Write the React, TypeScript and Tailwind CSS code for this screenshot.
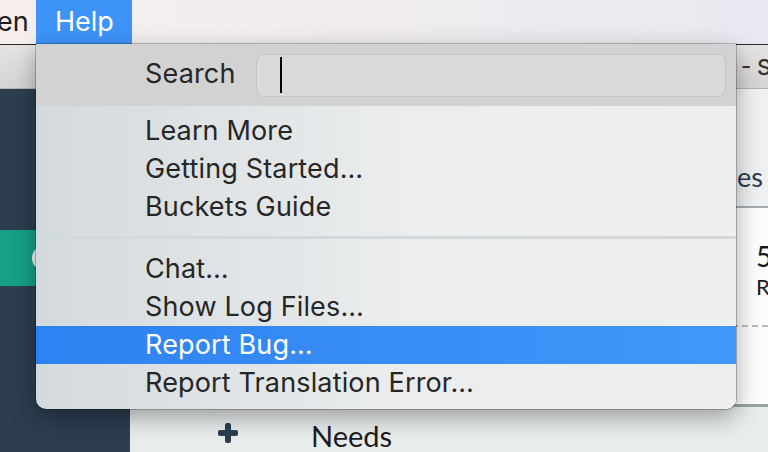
import React from "react";

const menuFont = "font-['Inter','Liberation_Sans',sans-serif]";

function PlusIcon() {
  return (
    <svg width="20" height="20" viewBox="0 0 20 20">
      <rect x="7" y="0" width="6" height="20" rx="2" fill="#2c3e50" />
      <rect x="0" y="7" width="20" height="6" rx="2" fill="#2c3e50" />
    </svg>
  );
}

function MenuBar() {
  return (
    <div className={`h-[44px] shrink-0 flex bg-linear-to-r from-[#f7efed] to-[#e8e9f0] text-[27px] ${menuFont}`}>
      <div className="w-[36px] shrink-0 flex items-center overflow-hidden">
        <span className="ml-[-3px] mt-[-2px] text-[#1d1d1d] leading-none">en</span>
      </div>
      <div className="w-[96px] shrink-0 bg-[#3d93f8] flex items-center pl-[19px] text-white leading-none">
        <span className="mt-[-2px]">Help</span>
      </div>
    </div>
  );
}

function TitleBar() {
  return (
    <div className="h-[44px] shrink-0 border-b border-[#b4b2b2] bg-linear-to-b from-[#e6e3e3] to-[#d5d3d3] flex items-center pl-[741px] overflow-hidden">
      <span className={`text-[22px] font-medium text-[#333] whitespace-nowrap leading-none ${menuFont}`}>- S</span>
    </div>
  );
}

function Sidebar() {
  return (
    <div className="w-[130px] shrink-0 bg-[#2c3e50] pt-[141px]">
      <div className="h-[56px] bg-[#17a085] flex items-center pl-[32px]">
        <div className="w-[26px] h-[26px] rounded-full bg-[#f4f4f4]" />
      </div>
    </div>
  );
}

function Main() {
  return (
    <div className="flex-1 min-w-0 flex flex-col font-['Lato',sans-serif] overflow-hidden">
      <div className="h-[119px] shrink-0 bg-[#eef0f2] border-b-2 border-[#a7adb1] flex items-end pb-[16px] pl-[607px]">
        <span className="text-[27px] text-[#2c3e50] leading-none">es</span>
      </div>
      <div className="h-[196px] shrink-0 bg-[#fdfdfd] flex flex-col pl-[626px] pt-[34px]">
        <span className="text-[28px] leading-none text-[#1a1a1a] h-[34px]">5</span>
        <span className="text-[22px] leading-none text-[#1a1a1a]">R</span>
        <div className="mt-[27px] ml-[-626px] border-t-2 border-dashed border-[#bdbdbd]" />
      </div>
      <div className="flex-1 bg-[#e9eced] border-t-[3px] border-[#95a5a6] flex items-start pl-[88px] pt-[16px]">
        <PlusIcon />
        <span className="ml-[73px] mt-[-2px] text-[29px] leading-none text-[#1c1c1c]">Needs</span>
      </div>
    </div>
  );
}

function Item({ label, active }: { label: string; active?: boolean }) {
  return (
    <div
      className={`h-[38px] flex items-center pl-[109px] pb-[2px] whitespace-nowrap ${
        active ? "bg-linear-to-r from-[#2d82f1] to-[#4297fa] text-white" : "text-[#262626]"
      }`}
    >
      {label}
    </div>
  );
}

function HelpMenu() {
  return (
    <div
      className={`absolute left-[36px] top-[44px] w-[700px] h-[365px] rounded-b-[10px] overflow-hidden bg-linear-to-r from-[#d3dadd] via-[#eaeced] to-[#f0efef] shadow-[0_8px_24px_rgba(0,0,0,0.35),0_0_0_1px_rgba(0,0,0,0.22)] text-[27px] tracking-[0.15px] leading-none ${menuFont}`}
    >
      <div className="h-[62px] bg-[#d2d2d2] flex items-center">
        <div className="w-[220px] pl-[109px] pb-[3px] text-[#262626]">Search</div>
        <div className="flex-1 mr-[10px] h-[43px] rounded-[8px] border border-[#c4c4c4] bg-[#d9d9d9] flex items-center pl-[23px]">
          <div className="w-[2px] h-[36px] bg-black" />
        </div>
      </div>
      <div className="pt-[6px]">
        <Item label="Learn More" />
        <Item label="Getting Started…" />
        <Item label="Buckets Guide" />
        <div className="h-[24px] pt-[10px]">
          <div className="h-[3px] bg-[#d4d8da]" />
        </div>
        <Item label="Chat…" />
        <Item label="Show Log Files…" />
        <Item label="Report Bug…" active />
        <Item label="Report Translation Error…" />
      </div>
    </div>
  );
}

export default function App() {
  return (
    <div className="relative w-[768px] h-[452px] overflow-hidden flex flex-col bg-[#e9eced]">
      <MenuBar />
      <div className="flex-1 flex flex-col border-t border-[#2a2a2a]">
        <TitleBar />
        <div className="flex-1 flex">
          <Sidebar />
          <Main />
        </div>
      </div>
      <HelpMenu />
    </div>
  );
}
